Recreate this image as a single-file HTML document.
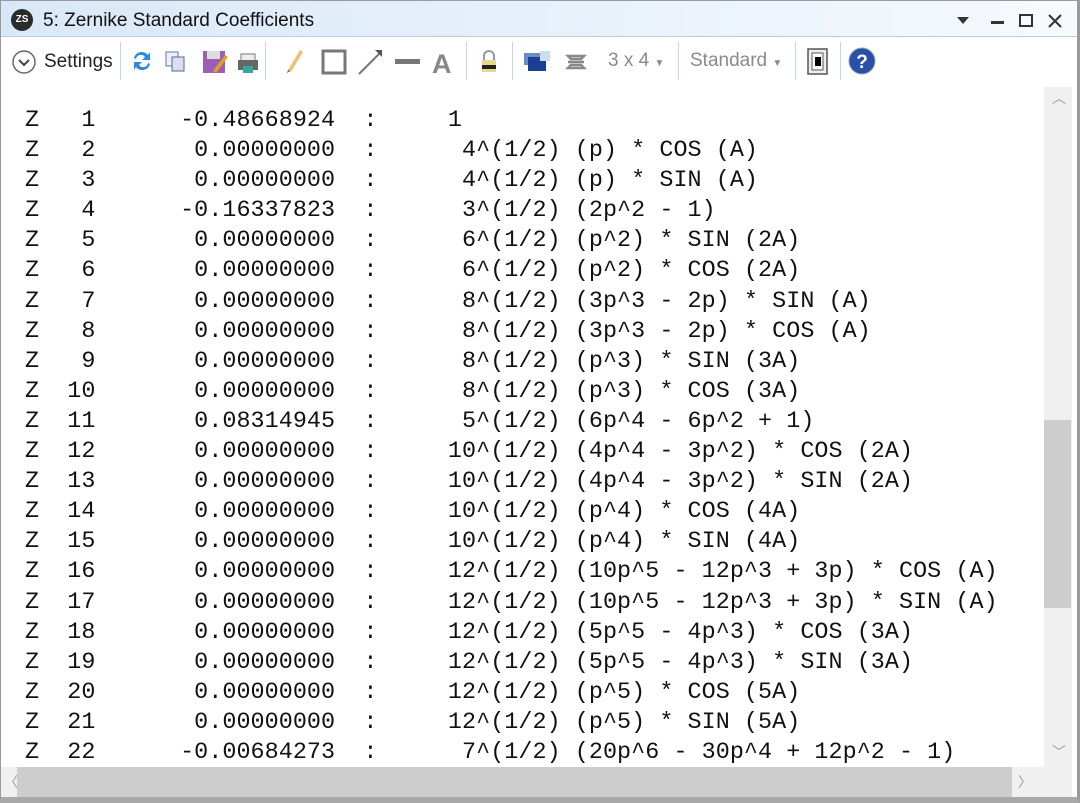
<!DOCTYPE html>
<html><head><meta charset="utf-8"><style>
*{margin:0;padding:0;box-sizing:border-box}
body{width:1080px;height:803px;overflow:hidden;background:#fff;position:relative;font-family:"Liberation Sans",sans-serif}
.frame{position:absolute;left:0;top:0;width:1080px;height:803px;border:1px solid #9a9a9a;border-right:3px solid #9a9a9a;border-bottom:6px solid #a8a8a8}
.title{position:absolute;left:1px;top:1px;width:1076px;height:36px;background:linear-gradient(90deg,#d9e8f8,#eaf2fb 60%,#f7fafd);border-bottom:1px solid #b9cde2}
.title .t{position:absolute;left:42px;top:9px;font-size:19px;color:#111}
.logo{position:absolute;left:10px;top:8px;width:22px;height:22px;border-radius:50%;background:#2b2b2b;color:#fff;font-size:10px;font-weight:bold;text-align:center;line-height:22px}
.tb{position:absolute;left:1px;top:37px;width:1076px;height:50px;background:#fff}
.sep{position:absolute;top:42px;width:1px;height:38px;background:#c7d5e3}
.grey{color:#8a8a8a;font-size:19px;position:absolute;top:50px}
.content{position:absolute;left:1px;top:87px;width:1043px;height:680px;background:#fff;overflow:hidden}
.lines{position:absolute;left:24px;top:19px;font-family:"Liberation Mono",monospace;font-size:23.4px;letter-spacing:0.06px;line-height:30.1px;white-space:pre;color:#111}
.vs{position:absolute;left:1044px;top:87px;width:28px;height:680px;background:#f0f0f0}
.vthumb{position:absolute;left:1044px;top:420px;width:27px;height:188px;background:#cdcdcd}
.hs{position:absolute;left:1px;top:767px;width:1071px;height:30px;background:#f0f0f0}
.hthumb{position:absolute;left:17px;top:767px;width:995px;height:30px;background:#cdcdcd}
.arr{position:absolute;color:#9a9a9a;font-size:14px}
</style></head><body>
<div class="title"><div class="logo">ZS</div><div class="t">5: Zernike Standard Coefficients</div>
<svg style="position:absolute;left:950px;top:10px" width="120" height="20"><path d="M6 6h12l-6 7z" fill="#333"/><rect x="40" y="10" width="13" height="3" fill="#333"/><rect x="69" y="4" width="12" height="11" fill="none" stroke="#333" stroke-width="2"/><path d="M98 4l12 12M110 4l-12 12" stroke="#333" stroke-width="2"/></svg>
</div>
<div class="tb"></div>
<svg style="position:absolute;left:11px;top:49px" width="26" height="26"><circle cx="13" cy="13" r="11" fill="#fff" stroke="#666" stroke-width="1.5"/><path d="M8 11l5 5 5-5" fill="none" stroke="#444" stroke-width="2"/></svg>
<div style="position:absolute;left:44px;top:51px;font-size:19px;color:#222">Settings</div>
<div class="sep" style="left:120px"></div>
<svg style="position:absolute;left:128px;top:46px" width="140" height="32">
<path d="M6 12a8 8 0 0 1 14-3l2-3v8h-8l3-3a5 5 0 0 0-9 2z" fill="#2a8be0"/><path d="M22 18a8 8 0 0 1-14 3l-2 3v-8h8l-3 3a5 5 0 0 0 9-2z" fill="#2a8be0"/>
<rect x="38" y="6" width="12" height="14" fill="#eef" stroke="#5a7ab0"/><rect x="44" y="11" width="12" height="14" fill="#dde" stroke="#4a6aa0"/>
<rect x="75" y="5" width="22" height="22" fill="#9c5fb5"/><rect x="79" y="5" width="13" height="8" fill="#ddd"/><path d="M85 25l12-16 3 2-12 16z" fill="#e0a020"/>
<rect x="113" y="8" width="14" height="8" fill="#eee" stroke="#777"/><rect x="110" y="14" width="20" height="10" fill="#666"/><rect x="115" y="20" width="10" height="7" fill="#3a9"/>
</svg>
<div class="sep" style="left:265px"></div>
<svg style="position:absolute;left:282px;top:44px" width="180" height="34">
<path d="M6 26l12-20 3 2-12 20z" fill="#f0c070"/><path d="M6 26l-1 3 3-2z" fill="#555"/>
<rect x="41" y="7" width="22" height="22" fill="none" stroke="#777" stroke-width="3"/>
<path d="M77 30l22-22" stroke="#777" stroke-width="2"/><path d="M93 6l7 0 0 7z" fill="#555"/>
<rect x="113" y="15" width="25" height="5" fill="#777"/>
<text x="150" y="29" font-family="Liberation Sans" font-weight="bold" font-size="27" fill="#888">A</text>
</svg>
<div class="sep" style="left:466px"></div>
<svg style="position:absolute;left:478px;top:46px" width="120" height="32">
<path d="M6 14v-4a5 5 0 0 1 10 0v4" fill="none" stroke="#999" stroke-width="2"/><rect x="4" y="14" width="14" height="12" fill="#e6d890"/><rect x="4" y="19" width="14" height="4" fill="#222"/>
<rect x="46" y="7" width="18" height="12" fill="#6a8ccc"/><rect x="50" y="11" width="18" height="14" fill="#1b3f95"/><rect x="62" y="5" width="10" height="10" fill="#cde"/>
<path d="M90 10h16l-3 3h-10zM90 16h16M90 22h16l-3-3h-10z" fill="none" stroke="#888" stroke-width="2.5"/>
</svg>
<div class="sep" style="left:512px"></div>
<div class="grey" style="left:608px">3 x 4 <span style="font-size:10px">▼</span></div>
<div class="sep" style="left:678px"></div>
<div class="grey" style="left:690px">Standard <span style="font-size:10px">▼</span></div>
<div class="sep" style="left:795px"></div>
<svg style="position:absolute;left:806px;top:47px" width="24" height="30"><rect x="2" y="2" width="19" height="25" fill="#eee" stroke="#555" stroke-width="1.5"/><rect x="6" y="6" width="11" height="17" fill="#fff" stroke="#555"/><rect x="9" y="10" width="6" height="9" fill="#000"/></svg>
<div class="sep" style="left:840px"></div>
<svg style="position:absolute;left:848px;top:47px" width="28" height="28"><circle cx="14" cy="14" r="13" fill="#2a4fa8" stroke="#8aa" stroke-width="1"/><text x="14" y="21" text-anchor="middle" font-family="Liberation Sans" font-weight="bold" font-size="19" fill="#fff">?</text></svg>
<div class="content"><div class="lines">Z   1      -0.48668924  :     1
Z   2       0.00000000  :      4^(1/2) (p) * COS (A)
Z   3       0.00000000  :      4^(1/2) (p) * SIN (A)
Z   4      -0.16337823  :      3^(1/2) (2p^2 - 1)
Z   5       0.00000000  :      6^(1/2) (p^2) * SIN (2A)
Z   6       0.00000000  :      6^(1/2) (p^2) * COS (2A)
Z   7       0.00000000  :      8^(1/2) (3p^3 - 2p) * SIN (A)
Z   8       0.00000000  :      8^(1/2) (3p^3 - 2p) * COS (A)
Z   9       0.00000000  :      8^(1/2) (p^3) * SIN (3A)
Z  10       0.00000000  :      8^(1/2) (p^3) * COS (3A)
Z  11       0.08314945  :      5^(1/2) (6p^4 - 6p^2 + 1)
Z  12       0.00000000  :     10^(1/2) (4p^4 - 3p^2) * COS (2A)
Z  13       0.00000000  :     10^(1/2) (4p^4 - 3p^2) * SIN (2A)
Z  14       0.00000000  :     10^(1/2) (p^4) * COS (4A)
Z  15       0.00000000  :     10^(1/2) (p^4) * SIN (4A)
Z  16       0.00000000  :     12^(1/2) (10p^5 - 12p^3 + 3p) * COS (A)
Z  17       0.00000000  :     12^(1/2) (10p^5 - 12p^3 + 3p) * SIN (A)
Z  18       0.00000000  :     12^(1/2) (5p^5 - 4p^3) * COS (3A)
Z  19       0.00000000  :     12^(1/2) (5p^5 - 4p^3) * SIN (3A)
Z  20       0.00000000  :     12^(1/2) (p^5) * COS (5A)
Z  21       0.00000000  :     12^(1/2) (p^5) * SIN (5A)
Z  22      -0.00684273  :      7^(1/2) (20p^6 - 30p^4 + 12p^2 - 1)</div></div>
<div class="vs"></div><div class="vthumb"></div>
<div class="arr" style="left:1052px;top:88px">︿</div>
<div class="arr" style="left:1052px;top:742px">﹀</div>
<div class="hs"></div><div class="hthumb"></div>
<div class="arr" style="left:4px;top:772px">〈</div>
<div class="arr" style="left:1018px;top:772px">〉</div>
<div class="frame"></div>
</body></html>
